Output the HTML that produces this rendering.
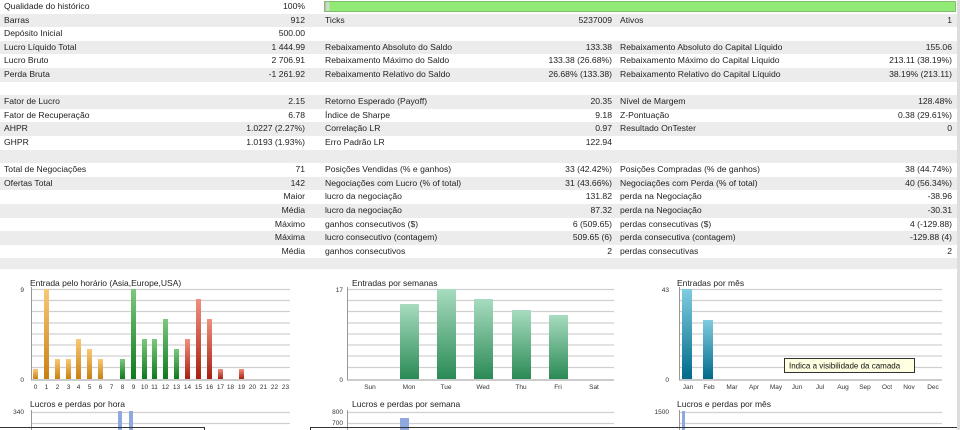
<!DOCTYPE html>
<html><head><meta charset="utf-8"><style>
*{margin:0;padding:0;box-sizing:border-box}
body{width:960px;height:430px;overflow:hidden;background:#fff;font-family:"Liberation Sans",sans-serif;font-size:8.6px;color:#222;position:relative}
.r{position:absolute;left:0;width:958px;height:13.6px;line-height:13.6px}
.g{background:#ececec}
.r span{position:absolute;white-space:nowrap}
.l1{left:4px}.v1{right:653px;text-align:right}.l2{left:325px}.v2{right:346px}.l3{left:620px}.v3{right:6px}
.sb{position:absolute;right:0;top:0;width:3px;height:430px;background:#ddd}
svg{position:absolute;left:0;top:0}
svg text{font-family:"Liberation Sans",sans-serif}
</style></head><body>
<div class="r" style="top:0"><span class="l1">Qualidade do histórico</span><span class="v1">100%</span></div>
<div style="position:absolute;left:324px;top:1px;width:632px;height:11px;border:1px solid #7fbf6a;background:linear-gradient(90deg,#bbb 0,#ddd 3px,#92ea76 5px,#92ea76 100%)"></div>
<div class="r g" style="top:13.6px"><span class="l1">Barras</span><span class="v1">912</span><span class="l2">Ticks</span><span class="v2">5237009</span><span class="l3">Ativos</span><span class="v3">1</span></div>
<div class="r" style="top:27.2px"><span class="l1">Depósito Inicial</span><span class="v1">500.00</span></div>
<div class="r g" style="top:40.8px"><span class="l1">Lucro Líquido Total</span><span class="v1">1 444.99</span><span class="l2">Rebaixamento Absoluto do Saldo</span><span class="v2">133.38</span><span class="l3">Rebaixamento Absoluto do Capital Líquido</span><span class="v3">155.06</span></div>
<div class="r" style="top:54.4px"><span class="l1">Lucro Bruto</span><span class="v1">2 706.91</span><span class="l2">Rebaixamento Máximo do Saldo</span><span class="v2">133.38 (26.68%)</span><span class="l3">Rebaixamento Máximo do Capital Líquido</span><span class="v3">213.11 (38.19%)</span></div>
<div class="r g" style="top:68px"><span class="l1">Perda Bruta</span><span class="v1">-1 261.92</span><span class="l2">Rebaixamento Relativo do Saldo</span><span class="v2">26.68% (133.38)</span><span class="l3">Rebaixamento Relativo do Capital Líquido</span><span class="v3">38.19% (213.11)</span></div>
<div class="r" style="top:81.6px"></div>
<div class="r g" style="top:95.2px"><span class="l1">Fator de Lucro</span><span class="v1">2.15</span><span class="l2">Retorno Esperado (Payoff)</span><span class="v2">20.35</span><span class="l3">Nível de Margem</span><span class="v3">128.48%</span></div>
<div class="r" style="top:108.8px"><span class="l1">Fator de Recuperação</span><span class="v1">6.78</span><span class="l2">Índice de Sharpe</span><span class="v2">9.18</span><span class="l3">Z-Pontuação</span><span class="v3">0.38 (29.61%)</span></div>
<div class="r g" style="top:122.4px"><span class="l1">AHPR</span><span class="v1">1.0227 (2.27%)</span><span class="l2">Correlação LR</span><span class="v2">0.97</span><span class="l3">Resultado OnTester</span><span class="v3">0</span></div>
<div class="r" style="top:136px"><span class="l1">GHPR</span><span class="v1">1.0193 (1.93%)</span><span class="l2">Erro Padrão LR</span><span class="v2">122.94</span></div>
<div class="r g" style="top:149.6px"></div>
<div class="r" style="top:163.2px"><span class="l1">Total de Negociações</span><span class="v1">71</span><span class="l2">Posições Vendidas (% e ganhos)</span><span class="v2">33 (42.42%)</span><span class="l3">Posições Compradas (% de ganhos)</span><span class="v3">38 (44.74%)</span></div>
<div class="r g" style="top:176.8px"><span class="l1">Ofertas Total</span><span class="v1">142</span><span class="l2">Negociações com Lucro (% of total)</span><span class="v2">31 (43.66%)</span><span class="l3">Negociações com Perda (% of total)</span><span class="v3">40 (56.34%)</span></div>
<div class="r" style="top:190.4px"><span class="v1">Maior</span><span class="l2">lucro da negociação</span><span class="v2">131.82</span><span class="l3">perda na Negociação</span><span class="v3">-38.96</span></div>
<div class="r g" style="top:204px"><span class="v1">Média</span><span class="l2">lucro da negociação</span><span class="v2">87.32</span><span class="l3">perda na Negociação</span><span class="v3">-30.31</span></div>
<div class="r" style="top:217.6px"><span class="v1">Máximo</span><span class="l2">ganhos consecutivos ($)</span><span class="v2">6 (509.65)</span><span class="l3">perdas consecutivas ($)</span><span class="v3">4 (-129.88)</span></div>
<div class="r g" style="top:231.2px"><span class="v1">Máxima</span><span class="l2">lucro consecutivo (contagem)</span><span class="v2">509.65 (6)</span><span class="l3">perda consecutiva (contagem)</span><span class="v3">-129.88 (4)</span></div>
<div class="r" style="top:244.8px"><span class="v1">Média</span><span class="l2">ganhos consecutivos</span><span class="v2">2</span><span class="l3">perdas consecutivas</span><span class="v3">2</span></div>
<div class="r g" style="top:258.4px;height:11px"></div>

<svg width="960" height="430" viewBox="0 0 960 430">
<defs>
<linearGradient id="o" x1="0" y1="0" x2="0" y2="1"><stop offset="0" stop-color="#f8c878"/><stop offset="1" stop-color="#c98010"/></linearGradient>
<linearGradient id="gr" x1="0" y1="0" x2="0" y2="1"><stop offset="0" stop-color="#7cc87c"/><stop offset="1" stop-color="#0e7a1e"/></linearGradient>
<linearGradient id="rd" x1="0" y1="0" x2="0" y2="1"><stop offset="0" stop-color="#f09080"/><stop offset="1" stop-color="#a82010"/></linearGradient>
<linearGradient id="tg" x1="0" y1="0" x2="0" y2="1"><stop offset="0" stop-color="#a8dcc0"/><stop offset="1" stop-color="#2a8a55"/></linearGradient>
<linearGradient id="bl" x1="0" y1="0" x2="0" y2="1"><stop offset="0" stop-color="#80cce0"/><stop offset="1" stop-color="#006a8a"/></linearGradient>
</defs>
<g stroke="#d0d0d0" stroke-width="1.2" fill="none">
<path d="M31 300.5H290M31 311.5H290M31 323H290M31 334H290M31 345H290M31 356H290M31 367.5H290M31 289.5H290"/>
<path d="M347 300.5H614M347 311.5H614M347 323H614M347 334H614M347 345H614M347 356H614M347 367.5H614M347 289.5H614"/>
<path d="M679 300.5H942M679 311.5H942M679 323H942M679 334H942M679 345H942M679 356H942M679 367.5H942M679 289.5H942"/>
<path d="M31 412.5H290M31 423.5H290M347 412.5H614M347 423.5H614M679 412.5H942M679 423.5H942"/>
</g>
<g stroke="#999" stroke-width="1" fill="none"><path d="M31.5 287V380H290M347.5 287V380H614M679.5 287V380H942M31.5 410V430M347.5 410V430M679.5 410V430"/></g>
<g font-size="8.5" fill="#222"><text x="30" y="286">Entrada pelo horário (Asia,Europe,USA)</text><text x="352" y="286">Entradas por semanas</text><text x="677" y="286">Entradas por mês</text>
<text x="30" y="407">Lucros e perdas por hora</text><text x="352" y="407">Lucros e perdas por semana</text><text x="677" y="407">Lucros e perdas por mês</text></g>
<g font-size="6.5" fill="#333" text-anchor="end"><text x="24" y="292">9</text><text x="24" y="382">0</text><text x="343" y="292">17</text><text x="343" y="382">0</text><text x="669" y="292">43</text><text x="669" y="382">0</text>
<text x="24" y="414">340</text><text x="343" y="414">800</text><text x="343" y="425">700</text><text x="669" y="414">1500</text></g>
<g>
<rect x="33" y="369" width="5" height="10" fill="url(#o)"/><rect x="44" y="289" width="5" height="90" fill="url(#o)"/><rect x="55" y="359" width="5" height="20" fill="url(#o)"/><rect x="66" y="359" width="5" height="20" fill="url(#o)"/><rect x="76" y="339" width="5" height="40" fill="url(#o)"/><rect x="87" y="349" width="5" height="30" fill="url(#o)"/><rect x="98" y="359" width="5" height="20" fill="url(#o)"/>
<rect x="120" y="359" width="5" height="20" fill="url(#gr)"/><rect x="131" y="289" width="5" height="90" fill="url(#gr)"/><rect x="142" y="339" width="5" height="40" fill="url(#gr)"/><rect x="152" y="339" width="5" height="40" fill="url(#gr)"/><rect x="163" y="319" width="5" height="60" fill="url(#gr)"/><rect x="174" y="349" width="5" height="30" fill="url(#gr)"/>
<rect x="185" y="339" width="5" height="40" fill="url(#rd)"/><rect x="196" y="299" width="5" height="80" fill="url(#rd)"/><rect x="207" y="319" width="5" height="60" fill="url(#rd)"/><rect x="218" y="369" width="5" height="10" fill="url(#rd)"/><rect x="239" y="369" width="5" height="10" fill="url(#rd)"/>
</g>
<g font-size="6.5" fill="#333" text-anchor="middle">
<text x="35.5" y="389">0</text><text x="46.5" y="389">1</text><text x="57.5" y="389">2</text><text x="68.5" y="389">3</text><text x="78.5" y="389">4</text><text x="89.5" y="389">5</text><text x="100.5" y="389">6</text><text x="111.5" y="389">7</text><text x="122.5" y="389">8</text><text x="133.5" y="389">9</text><text x="144.5" y="389">10</text><text x="154.5" y="389">11</text><text x="165.5" y="389">12</text><text x="176.5" y="389">13</text><text x="187.5" y="389">14</text><text x="198.5" y="389">15</text><text x="209.5" y="389">16</text><text x="220.5" y="389">17</text><text x="230.5" y="389">18</text><text x="241.5" y="389">19</text><text x="252.5" y="389">20</text><text x="263.5" y="389">21</text><text x="274.5" y="389">22</text><text x="285.5" y="389">23</text>
</g>
<rect x="400" y="304" width="19" height="75" fill="url(#tg)"/><rect x="437" y="289" width="19" height="90" fill="url(#tg)"/><rect x="474" y="299" width="19" height="80" fill="url(#tg)"/><rect x="512" y="310" width="19" height="69" fill="url(#tg)"/><rect x="549" y="315" width="19" height="64" fill="url(#tg)"/>
<g font-size="6.5" fill="#333" text-anchor="middle"><text x="370" y="389">Sun</text><text x="409" y="389">Mon</text><text x="446" y="389">Tue</text><text x="483" y="389">Wed</text><text x="521" y="389">Thu</text><text x="558" y="389">Fri</text><text x="594" y="389">Sat</text></g>
<rect x="682" y="289" width="10" height="90" fill="url(#bl)"/><rect x="703" y="320" width="10" height="59" fill="url(#bl)"/>
<g font-size="6.5" fill="#333" text-anchor="middle"><text x="688" y="389">Jan</text><text x="709" y="389">Feb</text><text x="732" y="389">Mar</text><text x="754" y="389">Apr</text><text x="776" y="389">May</text><text x="797" y="389">Jun</text><text x="820" y="389">Jul</text><text x="843" y="389">Aug</text><text x="865" y="389">Sep</text><text x="887" y="389">Oct</text><text x="909" y="389">Nov</text><text x="933" y="389">Dec</text></g>
<rect x="784.5" y="358.5" width="130" height="14" fill="#ffffe1" stroke="#333"/>
<text x="789" y="368.5" font-size="8" fill="#111">Indica a visibilidade da camada</text>
<rect x="118" y="411" width="4" height="19" fill="#8fa8e0"/><rect x="129" y="411" width="4" height="19" fill="#8fa8e0"/>
<rect x="400" y="418" width="9" height="12" fill="#8fa8e0"/><rect x="682" y="411" width="3" height="19" fill="#8fa8e0"/>
<path d="M0 427.5H204.5V430M310.5 430V427.5H960" stroke="#333" fill="none"/>
</svg>
<div class="sb"></div>
</body></html>
